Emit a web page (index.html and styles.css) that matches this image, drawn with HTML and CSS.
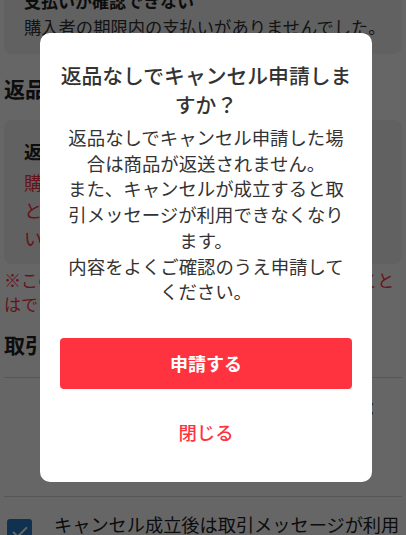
FILE: index.html
```html
<!DOCTYPE html>
<html lang="ja">
<head>
<meta charset="utf-8">
<title>キャンセル申請</title>
<link rel="stylesheet" href="styles.css">
</head>
<body>
<main class="page">
  <section class="card card-top">
    <p class="card-title">支払いが確認できない</p>
    <p class="card-text">購入者の期限内の支払いがありませんでした。</p>
  </section>

  <h2 class="heading heading-return">返品なしでキャンセル申請</h2>

  <section class="card card-return">
    <p class="card-title">返品なしでキャンセルについて</p>
    <p class="card-warn">購入者が商品を受け取っていない場合<br>と、返品が不要な場合のみ申請できます。<br>いずれの場合も購入者の同意が必要です。</p>
  </section>

  <p class="note">※このキャンセル申請を送信すると、取り消すこと<br>はできませんのでご注意ください。</p>

  <h2 class="heading heading-deal">取引について</h2>

  <div class="row row-info">
    <p class="info-text">取引をキャンセルすると次が適用されます：<br>取引メッセージと評価は利用できません。</p>
  </div>

  <label class="row row-check">
    <span class="checkbox" aria-hidden="true">
      <svg viewBox="0 0 24 24" width="22" height="22"><path d="M5 12.5l4.5 4.5L19 7.5" fill="none" stroke="#fff" stroke-width="2.2" stroke-linecap="round" stroke-linejoin="round"/></svg>
    </span>
    <span class="check-text">キャンセル成立後は取引メッセージが利用<br>できなくなることを確認しました</span>
  </label>
</main>

<div class="overlay"></div>

<div class="dialog" role="dialog" aria-modal="true">
  <h1 class="dialog-title">返品なしでキャンセル申請しますか？</h1>
  <p class="dialog-body">返品なしでキャンセル申請した場合は商品が返送されません。<br>また、キャンセルが成立すると取引メッセージが利用できなくなります。<br>内容をよくご確認のうえ申請してください。</p>
  <button class="btn-primary" type="button">申請する</button>
  <button class="btn-close" type="button">閉じる</button>
</div>
</body>
</html>
```
FILE: styles.css
```css
* { box-sizing: border-box; }

html, body {
  margin: 0;
  padding: 0;
  background: #fff;
  height: 100%;
  overflow: hidden;
}

body {
  font-family: "Noto Sans CJK JP", "Noto Sans", sans-serif;
  color: #222;
}

p, h1, h2 { margin: 0; }

.page {
  padding: 0 4px;
  margin-top: -18px;
  display: flex;
  flex-direction: column;
}

.card {
  background: #f2f2f2;
  border-radius: 8px;
  padding: 0 20px;
  width: 398px;
}

.card-top {
  padding-top: 6px;
  padding-bottom: 13px;
}

.card-title {
  font-size: 17px;
  font-weight: 700;
  line-height: 25px;
  white-space: nowrap;
}

.card-text {
  font-size: 17.3px;
  line-height: 28px;
  color: #333;
  white-space: nowrap;
}

.heading {
  font-size: 21px;
  font-weight: 700;
  line-height: 30px;
  color: #222;
  white-space: nowrap;
}

.heading-return {
  margin-top: 19px;
  margin-bottom: 17px;
}

.card-return {
  padding-top: 18px;
  padding-bottom: 12px;
}

.card-return .card-title {
  font-size: 18px;
  line-height: 26px;
  margin-bottom: 4px;
}

.card-warn {
  font-size: 18.4px;
  line-height: 28px;
  color: #ff3344;
  white-space: nowrap;
}

.note {
  font-size: 17px;
  line-height: 24px;
  color: #ff3344;
  margin-top: 4px;
  white-space: nowrap;
}

.heading-deal {
  margin-top: 13px;
  padding-bottom: 18px;
  border-bottom: 1px solid #d6d6d6;
}

.row {
  border-bottom: 1px solid #d6d6d6;
}

.row-info {
  padding: 17px 0 49px 36px;
}

.info-text {
  font-size: 17px;
  line-height: 26px;
  color: #333;
  white-space: nowrap;
}

.row-check {
  display: flex;
  gap: 22px;
  align-items: flex-start;
  padding: 14px 0 0 3px;
  border-bottom: none;
}

.checkbox {
  flex: none;
  width: 25px;
  height: 25px;
  margin-top: 8px;
  border-radius: 3px;
  background: #2a7bc9;
  display: flex;
  align-items: center;
  justify-content: center;
}

.check-text {
  font-size: 18.2px;
  line-height: 26px;
  color: #222;
  white-space: nowrap;
}

.overlay {
  position: fixed;
  inset: 0;
  background: rgba(0, 0, 0, 0.6);
}

.dialog {
  position: fixed;
  left: 40px;
  top: 33px;
  width: 332px;
  height: 449px;
  background: #fff;
  border-radius: 10px;
  padding: 28px 20px 0;
  display: flex;
  flex-direction: column;
  align-items: stretch;
  text-align: center;
}

.dialog-title {
  font-size: 20.8px;
  font-weight: 500;
  line-height: 29px;
  color: #333;
}

.dialog-body {
  margin-top: 6px;
  font-size: 18.4px;
  line-height: 25.7px;
  color: #333;
}

.btn-primary {
  margin-top: 33px;
  height: 51px;
  border: none;
  border-radius: 4px;
  background: #ff333f;
  color: #fff;
  font-family: inherit;
  font-size: 18px;
  font-weight: 700;
}

.btn-close {
  margin-top: 18px;
  height: 50px;
  border: none;
  background: transparent;
  color: #ff333f;
  font-family: inherit;
  font-size: 18.4px;
  font-weight: 500;
}
```
